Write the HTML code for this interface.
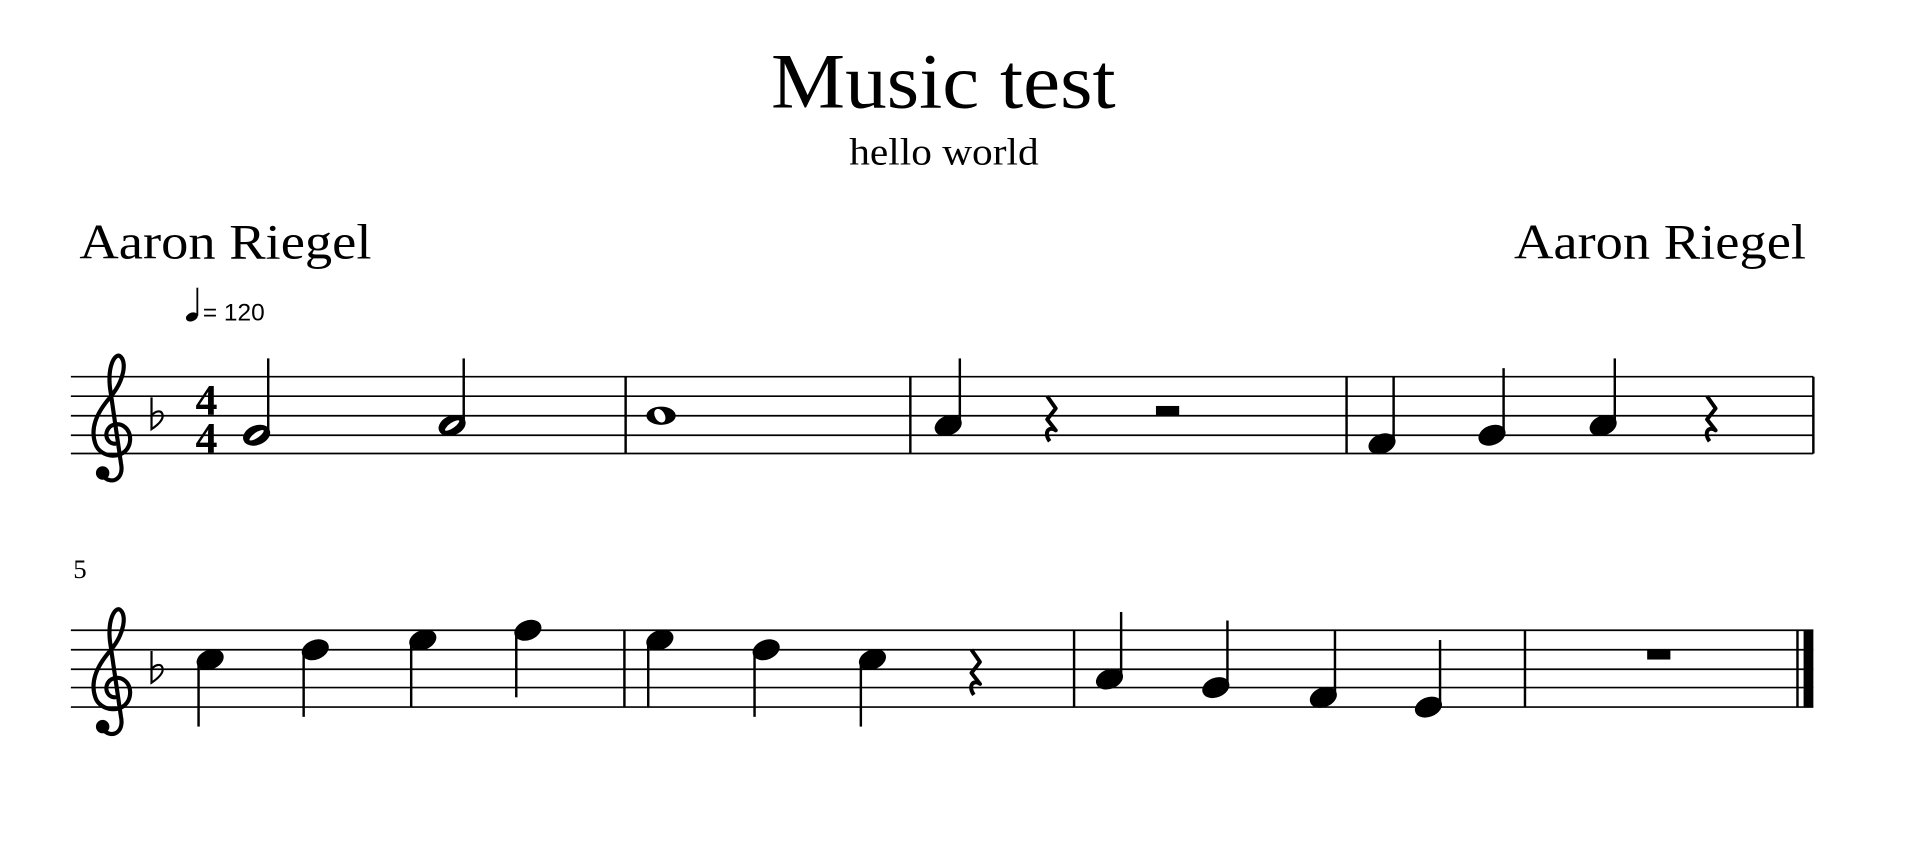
<!DOCTYPE html>
<html><head><meta charset="utf-8"><style>
html,body{margin:0;padding:0;background:#fff;width:1916px;height:868px;overflow:hidden}
svg{display:block}
</style></head><body>
<svg width="1916" height="868" viewBox="0 0 1568 712" preserveAspectRatio="none" xmlns="http://www.w3.org/2000/svg">
<defs>
<g id="clef">
<path d="M-2,98 C4,106 16,102 13,88 L4,26 C2,8 8,-2 12,0 C18,4 16,20 4,34 C-8,48 -12,60 -8,72 C-4,84 16,86 20,72 C23,60 12,52 4,58 C-2,64 2,72 8,72" fill="none" stroke="#000" stroke-width="3.4" stroke-linecap="round"/>
<circle cx="-2" cy="96" r="5.5" fill="#000"/>
</g>
<g id="flat"><path d="M0,-26 L0,0 C6,-4 10,-8 9,-12 C8,-16 3,-15 0,-11" fill="none" stroke="#000" stroke-width="1.8"/></g>
<ellipse id="hf" cx="0" cy="0" rx="10.5" ry="7" transform="rotate(-22)" fill="#000"/>
<g id="hh"><ellipse cx="0" cy="0" rx="10.5" ry="7" transform="rotate(-22)" fill="#000"/><ellipse cx="0" cy="0" rx="8" ry="3.2" transform="rotate(-35)" fill="#fff"/></g>
<g id="qr"><path d="M-3,-18 L4,-8 L-3,1 L4,10 C-2,6 -6,12 -1,19" fill="none" stroke="#000" stroke-width="3.2" stroke-linejoin="round"/></g>
</defs>
<g font-family="'Liberation Serif',serif" fill="#000">
<text x="631" y="88" font-size="64" textLength="282" lengthAdjust="spacingAndGlyphs">Music test</text>
<text x="695" y="135" font-size="31" textLength="155" lengthAdjust="spacingAndGlyphs">hello world</text>
<text x="65" y="212" font-size="41" textLength="239" lengthAdjust="spacingAndGlyphs">Aaron Riegel</text>
<text x="1239" y="212" font-size="41" textLength="239" lengthAdjust="spacingAndGlyphs">Aaron Riegel</text>
<text x="60" y="474" font-size="22">5</text>
</g>
<ellipse cx="157" cy="260" rx="5" ry="3.5" transform="rotate(-22 157 260)" fill="#000"/>
<line x1="161.5" y1="259" x2="161.5" y2="236" stroke="#000" stroke-width="1.5"/>
<text x="166" y="263" font-family="'Liberation Sans',sans-serif" font-size="20">= 120</text>
<g stroke="#000" stroke-width="1.4">
<line x1="58" y1="309" x2="1484" y2="309"/><line x1="58" y1="325" x2="1484" y2="325"/><line x1="58" y1="341" x2="1484" y2="341"/><line x1="58" y1="357" x2="1484" y2="357"/><line x1="58" y1="372" x2="1484" y2="372"/>
<line x1="58" y1="517" x2="1484" y2="517"/><line x1="58" y1="533" x2="1484" y2="533"/><line x1="58" y1="549" x2="1484" y2="549"/><line x1="58" y1="564" x2="1484" y2="564"/><line x1="58" y1="580" x2="1484" y2="580"/>
</g>
<g stroke="#000" stroke-width="2">
<line x1="512" y1="309" x2="512" y2="372"/><line x1="745" y1="309" x2="745" y2="372"/><line x1="1102" y1="309" x2="1102" y2="372"/><line x1="1484" y1="309" x2="1484" y2="372"/>
<line x1="511" y1="517" x2="511" y2="580"/><line x1="879" y1="517" x2="879" y2="580"/><line x1="1248" y1="517" x2="1248" y2="580"/><line x1="1471" y1="517" x2="1471" y2="580"/>
</g>
<rect x="1476" y="517" width="8" height="63" fill="#000"/>
<use href="#clef" x="86" y="292"/>
<use href="#clef" x="86" y="500"/>
<use href="#flat" x="124" y="352"/>
<use href="#flat" x="124" y="560"/>
<g font-family="'Liberation Serif',serif" font-weight="bold" font-size="36" text-anchor="middle">
<text x="169" y="340">4</text><text x="169" y="371">4</text>
</g>
<g stroke="#000" stroke-width="2">
<use href="#hh" x="210" y="357"/><line x1="219.5" y1="354" x2="219.5" y2="294"/>
<use href="#hh" x="370" y="349"/><line x1="379.5" y1="346" x2="379.5" y2="294"/>
<use href="#hf" x="776" y="349"/><line x1="785.5" y1="346" x2="785.5" y2="294"/>
<use href="#hf" x="1131" y="364"/><line x1="1140.5" y1="361" x2="1140.5" y2="309"/>
<use href="#hf" x="1221" y="357"/><line x1="1230.5" y1="354" x2="1230.5" y2="302"/>
<use href="#hf" x="1312" y="349"/><line x1="1321.5" y1="346" x2="1321.5" y2="294"/>
</g>
<ellipse cx="541" cy="341" rx="12" ry="7.5" fill="#000"/><ellipse cx="540" cy="341" rx="4" ry="6" transform="rotate(-30 540 341)" fill="#fff"/>
<use href="#qr" x="860" y="343"/>
<use href="#qr" x="1400" y="343"/>
<rect x="946" y="333" width="19" height="8" fill="#000"/>
<g stroke="#000" stroke-width="2">
<use href="#hf" x="172" y="541"/><line x1="162.5" y1="544" x2="162.5" y2="596"/>
<use href="#hf" x="258" y="533"/><line x1="248.5" y1="536" x2="248.5" y2="588"/>
<use href="#hf" x="346" y="525"/><line x1="336.5" y1="528" x2="336.5" y2="580"/>
<use href="#hf" x="432" y="517"/><line x1="422.5" y1="520" x2="422.5" y2="572"/>
<use href="#hf" x="540" y="525"/><line x1="530.5" y1="528" x2="530.5" y2="580"/>
<use href="#hf" x="627" y="533"/><line x1="617.5" y1="536" x2="617.5" y2="588"/>
<use href="#hf" x="714" y="541"/><line x1="704.5" y1="544" x2="704.5" y2="596"/>
<use href="#hf" x="908" y="557"/><line x1="917.5" y1="554" x2="917.5" y2="502"/>
<use href="#hf" x="995" y="564"/><line x1="1004.5" y1="561" x2="1004.5" y2="509"/>
<use href="#hf" x="1083" y="572"/><line x1="1092.5" y1="569" x2="1092.5" y2="517"/>
<use href="#hf" x="1169" y="580"/><line x1="1178.5" y1="577" x2="1178.5" y2="525"/>
</g>
<use href="#qr" x="798" y="551"/>
<rect x="1348" y="533" width="19" height="8" fill="#000"/>
</svg>
</body></html>
